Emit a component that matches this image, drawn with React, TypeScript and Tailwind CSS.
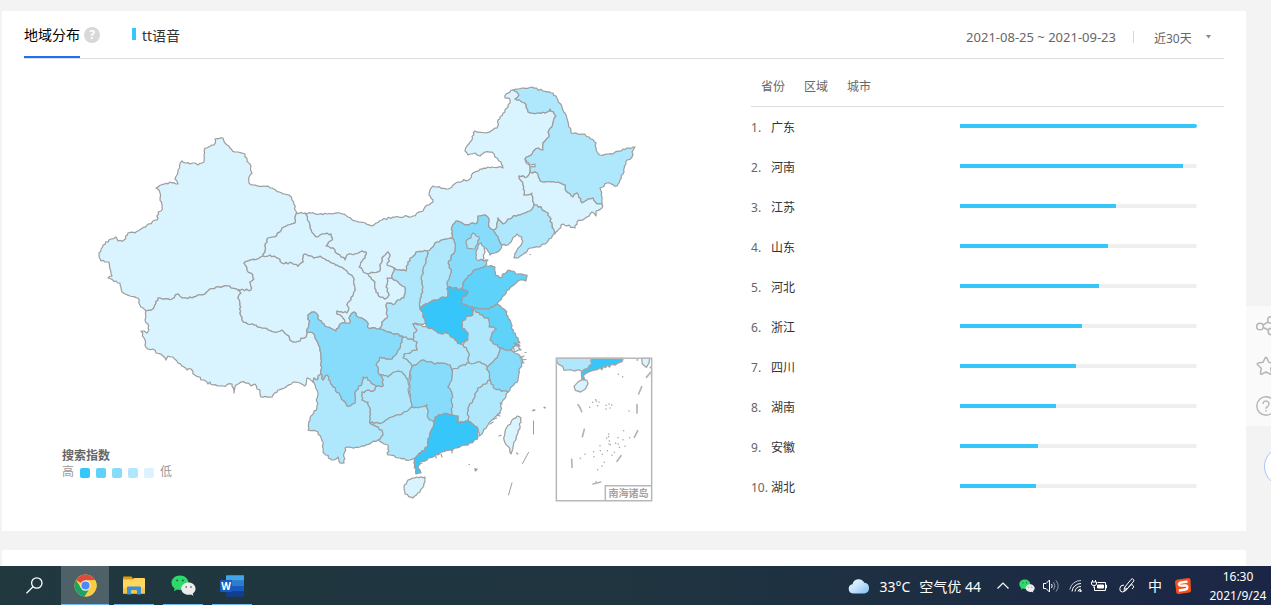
import type { ReactNode } from "react";
import { useState } from "react";

type Level = 1 | 2 | 3 | 4 | 5;

type Province = {
  name: string;
  level: Level;
  outline: string;
};

type Region = {
  name: string;
  share: number;
};

const LEVEL_COLORS: Record<Level, string> = {
  1: "#37c6fa",
  2: "#5fd2fa",
  3: "#87dcfb",
  4: "#afe8fd",
  5: "#d9f3ff",
};

const LEGEND = ["bg-[#37c6fa]", "bg-[#5fd2fa]", "bg-[#87dcfb]", "bg-[#afe8fd]", "bg-[#d9f3ff]"];

// Later provinces are painted over earlier ones, so shared borders stay one line wide.
const PROVINCES: Province[] = [
  {
    name: "内蒙古",
    level: 5,
    outline:
      "305,213 327,214 340,213 348,217 356,221 365,223 372,226 382,220 393,217 413,216 423,211 425,207 433,202 429,195 430,190 433,186 437,187 448,189 458,182 470,179 473,173 480,169 492,167 503,168 501,162 495,157 492,152 485,152 480,156 475,153 468,155 465,151 470,142 475,131 485,133 497,128 498,120 508,107 510,103 509,98 505,98 506,94 513,90 517,92 519,95 515,99 525,103 528,112 537,113 547,112 550,109 556,116 553,123 549,130 549,137 543,143 543,150 538,148 525,159 530,167 530,172 527,177 519,176 523,185 524,195 532,193 534,205 530,211 518,215 508,219 503,224 498,218 497,227 493,230 489,227 489,220 485,215 478,216 477,223 465,225 456,221 452,227 452,238 437,242 433,247 427,251 416,252 408,262 406,271 397,270 394,268 387,265 390,255 388,252 382,258 380,271 368,274 365,273 359,267 365,258 366,252 362,251 355,254 347,255 345,260 340,255 335,252 333,248 326,246 332,240 331,234 325,234 316,237 310,228 309,222",
  },
  {
    name: "新疆",
    level: 5,
    outline:
      "297,213 292,200 289,195 283,194 272,188 264,186 253,185 249,183 249,177 252,173 251,166 247,161 245,154 238,152 235,152 230,148 225,143 223,138 215,139 214,145 205,148 204,155 204,162 198,165 195,163 190,164 182,161 178,170 175,179 178,184 170,182 156,188 159,190 160,198 162,207 161,211 158,212 157,220 147,225 135,233 128,233 124,240 118,241 116,237 111,239 103,245 99,253 101,261 109,262 110,269 112,276 108,278 120,283 122,292 130,296 138,298 141,307 146,311 153,309 158,298 172,299 178,294 182,298 192,298 198,295 205,294 210,289 227,286 238,290 251,290 250,282 254,279 251,273 247,270 244,263 263,256 268,238 275,237 282,228 288,225 295,223 296,214",
  },
  {
    name: "西藏",
    level: 5,
    outline:
      "238,290 227,286 210,289 205,294 198,295 192,298 182,298 178,294 172,299 158,298 153,309 146,311 145,320 148,324 149,330 147,333 144,331 141,331 144,338 145,345 148,349 153,349 156,353 163,356 166,360 168,356 173,357 178,363 184,367 187,370 191,369 193,374 200,377 201,380 204,380 208,384 210,382 213,385 223,386 232,384 234,393 236,385 241,382 248,383 251,386 255,384 257,389 260,390 261,397 272,397 278,390 287,386 293,382 300,383 305,386 307,378 313,382 314,378 317,380 318,376 321,374 321,363 320,350 318,343 315,338 313,333 307,332 306,337 301,338 300,341 296,342 290,340 289,336 282,330 277,332 262,328 256,325 248,324 242,320 240,313 240,303 238,298 241,293",
  },
  {
    name: "青海",
    level: 5,
    outline:
      "244,263 247,270 251,273 254,279 250,282 251,290 238,290 241,293 238,298 240,303 240,313 242,320 248,324 256,325 262,328 277,332 282,330 289,336 290,340 296,342 300,341 301,338 306,337 307,332 309,323 308,315 312,312 317,314 319,320 327,327 336,331 340,324 345,323 343,318 337,314 337,311 347,313 349,308 347,305 353,296 355,288 353,277 348,273 343,268 332,263 325,259 320,256 314,258 304,254 303,262 298,266 292,263 282,263 280,259 270,255 263,256",
  },
  {
    name: "甘肃",
    level: 5,
    outline:
      "263,256 268,238 275,237 282,228 288,225 295,223 296,214 297,213 305,213 309,222 310,228 316,237 325,234 331,234 332,240 326,246 333,248 335,252 340,255 345,260 347,255 355,254 362,251 366,252 365,258 359,267 365,273 368,274 375,282 376,292 380,297 385,299 389,295 386,287 387,278 392,278 398,282 405,287 404,298 398,300 395,304 387,303 387,318 382,322 381,327 377,329 368,328 367,322 358,317 354,312 350,316 350,323 345,323 343,318 337,314 337,311 347,313 349,308 347,305 353,296 355,288 353,277 348,273 343,268 332,263 325,259 320,256 314,258 304,254 303,262 298,266 292,263 282,263 280,259 270,255",
  },
  {
    name: "宁夏",
    level: 5,
    outline:
      "368,274 380,271 382,258 388,252 390,255 387,265 394,268 392,278 387,278 386,287 389,295 385,299 380,297 376,292 375,282",
  },
  {
    name: "黑龙江",
    level: 4,
    outline:
      "513,90 517,89 532,87 543,91 553,93 558,100 563,110 568,122 571,133 582,134 589,137 596,143 596,148 600,155 613,154 623,149 635,147 632,152 632,157 627,160 624,172 617,186 607,183 600,188 602,197 602,204 597,204 593,198 587,200 582,203 577,193 573,197 566,191 565,185 554,182 540,181 537,173 530,172 530,167 535,167 535,164 530,165 525,159 538,148 543,150 543,143 549,137 549,130 553,123 556,116 550,109 547,112 537,113 528,112 525,103 515,99 519,95 517,92",
  },
  {
    name: "吉林",
    level: 5,
    outline:
      "530,172 537,173 540,181 554,182 565,185 566,191 573,197 577,193 582,203 587,200 593,198 597,204 602,204 602,208 596,211 596,216 592,212 587,217 577,222 575,228 563,224 555,234 552,225 548,213 537,205 534,205 532,193 524,195 523,185 519,176 527,177",
  },
  {
    name: "辽宁",
    level: 4,
    outline:
      "537,205 548,213 552,225 554,234 548,241 540,247 530,248 518,258 514,258 517,250 522,243 522,237 517,234 512,240 508,245 502,245 495,233 493,230 497,227 498,218 503,224 508,219 518,215 530,211 534,205",
  },
  {
    name: "河北",
    level: 3,
    outline:
      "493,230 495,233 502,245 500,250 495,253 490,255 486,248 480,250 482,260 488,260 485,266 473,271 463,283 463,290 448,287 447,282 451,272 448,263 455,250 454,240 452,238 452,227 456,221 465,225 477,223 478,216 485,215 489,220 489,227",
  },
  {
    name: "北京",
    level: 4,
    outline: "473,233 476,236 479,237 478,243 475,249 467,248 466,243 468,239 471,238",
  },
  {
    name: "天津",
    level: 5,
    outline: "481,243 484,247 485,252 483,260 477,260 476,253 478,246",
  },
  {
    name: "山东",
    level: 2,
    outline:
      "485,266 495,267 495,275 500,278 508,270 518,274 527,275 526,281 520,280 510,288 502,297 497,304 490,308 478,309 472,307 461,303 462,299 468,292 463,290 463,283 473,271",
  },
  {
    name: "山西",
    level: 4,
    outline:
      "452,238 454,240 455,250 448,263 451,272 447,282 448,287 447,297 435,300 420,307 422,290 422,275 427,257 427,251 433,247 437,242",
  },
  {
    name: "陕西",
    level: 4,
    outline:
      "427,251 427,257 422,275 422,290 420,307 423,315 427,324 413,324 417,330 414,333 414,341 402,336 390,332 380,329 381,327 382,322 387,318 387,303 395,304 398,300 404,298 405,287 398,282 392,278 394,268 397,270 406,271 408,262 416,252",
  },
  {
    name: "河南",
    level: 1,
    outline:
      "420,307 435,300 447,297 448,287 463,290 468,292 462,299 461,303 472,307 473,315 468,316 462,322 462,328 468,333 468,340 460,344 455,340 449,334 438,333 427,327 423,315",
  },
  {
    name: "江苏",
    level: 2,
    outline:
      "472,307 478,309 490,308 497,304 505,310 510,320 513,332 518,338 520,343 514,343 520,346 513,347 512,351 500,348 490,340 492,333 496,329 493,327 489,327 488,318 480,315",
  },
  {
    name: "安徽",
    level: 4,
    outline:
      "472,307 480,315 488,318 489,327 493,327 496,329 492,333 490,340 500,348 497,358 487,367 480,362 469,363 468,352 463,345 468,340 468,333 462,328 462,322 468,316 473,315",
  },
  {
    name: "浙江",
    level: 3,
    outline:
      "500,348 512,351 518,354 522,358 523,362 520,368 518,380 508,392 495,389 490,380 487,367 497,358",
  },
  {
    name: "上海",
    level: 5,
    outline: "513,347 518,346 521,350 514,352",
  },
  {
    name: "湖北",
    level: 4,
    outline:
      "413,324 427,327 438,333 449,334 455,340 460,344 463,345 468,352 469,363 452,370 450,365 433,363 423,360 412,367 409,362 403,358 404,354 417,350 417,342 414,341 414,333 417,330",
  },
  {
    name: "重庆",
    level: 4,
    outline:
      "402,336 414,341 417,342 417,350 404,354 403,358 409,362 412,367 410,372 408,381 402,372 395,372 388,377 380,375 376,365 380,357 392,359 398,350 402,342",
  },
  {
    name: "湖南",
    level: 3,
    outline:
      "412,367 423,360 433,363 450,365 452,370 452,378 448,387 452,393 452,415 443,414 434,422 428,418 427,405 420,407 412,407 410,397 410,385 410,372",
  },
  {
    name: "江西",
    level: 4,
    outline:
      "452,370 469,363 480,362 487,367 490,380 478,388 473,400 468,408 468,421 457,423 458,416 452,415 452,393 448,387 452,378",
  },
  {
    name: "福建",
    level: 4,
    outline:
      "490,380 495,389 508,392 502,402 500,413 488,425 479,436 477,427 468,421 468,408 473,400 478,388",
  },
  {
    name: "云南",
    level: 4,
    outline:
      "321,374 323,380 327,375 332,385 340,395 347,406 355,403 355,392 362,383 363,377 367,377 368,380 377,386 375,390 362,392 362,400 368,402 370,412 370,423 382,430 383,435 378,440 372,442 360,447 345,448 344,463 340,463 338,457 332,460 323,452 323,442 318,432 308,430 310,418 317,408 317,390 313,382 314,378 317,380 318,376",
  },
  {
    name: "贵州",
    level: 4,
    outline:
      "380,375 388,377 395,372 402,372 408,381 410,397 412,407 403,413 392,417 382,423 370,423 370,412 368,402 362,400 362,392 375,390 377,386 383,386 383,380",
  },
  {
    name: "四川",
    level: 3,
    outline:
      "307,332 309,323 308,315 312,312 317,314 319,320 327,327 336,331 340,324 345,323 350,323 350,316 354,312 358,317 367,322 368,328 377,329 380,329 390,332 402,336 402,342 398,350 392,359 380,357 376,365 380,375 383,380 383,386 377,386 368,380 367,377 363,377 362,383 355,392 355,403 347,406 340,395 332,385 327,375 323,380 321,374 321,363 320,350 318,343 315,338 313,333",
  },
  {
    name: "广西",
    level: 4,
    outline:
      "370,423 382,423 392,417 403,413 412,407 420,407 427,405 428,418 434,422 430,433 427,447 415,458 410,460 400,458 388,455 388,445 378,440 383,435 382,430",
  },
  {
    name: "广东",
    level: 1,
    outline:
      "434,422 435,417 443,414 452,415 458,416 457,423 468,421 477,427 478,437 472,443 461,446 450,450 442,452 433,457 420,462 418,468 421,473 416,474 414,463 415,458 427,447 430,433",
  },
  {
    name: "海南",
    level: 5,
    outline: "408,480 417,477 425,477 425,482 420,492 413,498 405,494 404,487",
  },
  {
    name: "台湾",
    level: 5,
    outline: "517,416 521,418 520,426 518,433 513,447 511,454 510,449 504,440 505,432 507,427",
  },
];

const REGIONS: Region[] = [
  { name: "广东", share: 100 },
  { name: "河南", share: 94 },
  { name: "江苏", share: 66 },
  { name: "山东", share: 62.5 },
  { name: "河北", share: 58.5 },
  { name: "浙江", share: 51.5 },
  { name: "四川", share: 49 },
  { name: "湖南", share: 40.5 },
  { name: "安徽", share: 33 },
  { name: "湖北", share: 32 },
];

const ISLETS = [
  [149, 187], [158, 172], [167, 164], [169, 168], [177, 171], [173, 182], [198, 181], [198, 192],
  [207, 177], [215, 180], [210, 189], [267, 198], [235, 88], [248, 95], [251, 257], [206, 267],
  [206, 275], [200, 279], [234, 278], [249, 284], [269, 278], [208, 288], [207, 297], [211, 299],
  [227, 295], [235, 297], [180, 302], [238, 307], [255, 304], [161, 320], [181, 317], [202, 317],
  [162, 335], [187, 328], [216, 331], [223, 322], [135, 328], [121, 340], [193, 352], [186, 363],
  [173, 374], [168, 410],
];

type Point = [number, number];

function noise(a: number, b: number, seed: number) {
  const n = Math.sin(a * 12.9898 + b * 78.233 + seed * 37.719) * 43758.5453;
  return (n - Math.floor(n)) * 2 - 1;
}

// Adds small bends to each edge. The bend depends only on the edge itself,
// so two neighbours bend their shared border in the same way.
function roughen(outline: string) {
  const points = outline.split(" ").map((pair) => pair.split(",").map(Number) as Point);
  let d = "";
  points.forEach((start, i) => {
    const end = points[(i + 1) % points.length];
    const flip = start[0] > end[0] || (start[0] === end[0] && start[1] > end[1]);
    const [p, q] = flip ? [end, start] : [start, end];
    const dx = q[0] - p[0];
    const dy = q[1] - p[1];
    const length = Math.hypot(dx, dy);
    const count = Math.floor(length / 2);
    const bends: Point[] = [];
    for (let k = 1; k < count; k++) {
      const t = k / count;
      const offset = noise(p[0] + q[0], p[1] + q[1], k);
      bends.push([p[0] + dx * t - (dy / length) * offset, p[1] + dy * t + (dx / length) * offset]);
    }
    if (flip) bends.reverse();
    d += `${i === 0 ? "M" : "L"}${start[0]} ${start[1]}`;
    bends.forEach(([x, y]) => {
      d += `L${x.toFixed(1)} ${y.toFixed(1)}`;
    });
  });
  return `${d}Z`;
}

const SHAPES = PROVINCES.map((province) => ({ ...province, d: roughen(province.outline) }));

function ChinaMap() {
  return (
    <svg viewBox="24 59 727 448" className="block w-full" role="img" aria-label="tt语音">
      <g stroke="#9d9d9d" strokeWidth="1.2" strokeLinejoin="round">
        {SHAPES.map(({ name, level, d }) => (
          <path key={name} d={d} fill={LEVEL_COLORS[level]} />
        ))}
      </g>
      <g fill="none" stroke="#9d9d9d" strokeWidth="1.2" strokeLinecap="round">
        <path strokeWidth="1" d="M533.5 421v13M528.500 452.500l-6 11M512 483l-3.500 12" />
        <path strokeWidth="1.800" d="M533 410.500l1.500-.5M544.300 407.500l.5.200M475 469l1.500.5-1 1" />
        <path d="M499 436l2-.800M516.500 453l1.500 1M469 464.500h.5M525 352.500h1" />
        <path d="M520 358l4-2M521 360l5-.5M521 362l3 1M530 254.500h.5M526 253h.5" />
        <path d="M500 403l2 1M500 413l-3 2 3 1M497 418l-4 1M493 422l-3 2M452 450v3M441 454l1 3M436 456v2M420 464l2-1" />
      </g>
      <g transform="translate(540 345) scale(.33333)">
        <g stroke="#a5a5a5" strokeWidth="4" strokeLinejoin="round">
          <path
            fill="#afe8fd"
            d="M50 40H155L153 50 156 56 148 62 144 70 132 74 126 80 118 74 102 78 92 74 72 76 68 64 56 58 50 50Z"
          />
          <path
            fill="#37c6fa"
            d="M155 40H250L246 50 234 54 226 60 214 58 208 66 202 60 197 68 190 64 186 74 180 68 172 74 160 76 148 80 136 86 130 92 135 106 126 104 124 84 132 74 144 70 148 62 156 56 153 50Z"
          />
          <path fill="#d9f3ff" d="M115 110 128 104 141 106 144 116 136 132 122 141 106 136 102 124Z" />
          <path fill="#d9f3ff" d="M305 40H329L327 54 319 67 307 57Z" />
        </g>
        <g fill="none" stroke="#b4b4b4" strokeWidth="5" strokeLinecap="round">
          <path d="M114 179 119 186 125 200M133 253 127 275M95 343 96 367M159 417 182 411M243 332 231 349M293 257 283 277M291 179V204M305 125 296 147M332 82 319 97M292 42V46M331 66V68" />
        </g>
        <g fill="#a3a3a3">
          {ISLETS.map(([x, y]) => (
            <circle key={`${x}-${y}`} cx={x} cy={y} r="2.300" />
          ))}
        </g>
        <path fill="none" stroke="#b8b8b8" strokeWidth="4.500" d="M49 40H335V467H49ZM196 467V422H335" />
      </g>
      <text
        x="628.500"
        y="497"
        textAnchor="middle"
        fill="#a3a3a3"
        className="font-['Noto_Sans_CJK_SC',sans-serif] text-[10px] font-bold"
      >
        南海诸岛
      </text>
    </svg>
  );
}

function MapLegend() {
  return (
    <div className="absolute left-[38px] top-[389px] text-xs leading-4">
      <div className="font-bold text-[#666]">搜索指数</div>
      <div className="flex items-center text-[#999]">
        <span>高</span>
        <span className="mx-[6px] mt-px flex gap-[6px]">
          {LEGEND.map((color) => (
            <i key={color} className={`size-[10px] rounded-[2px] ${color}`} />
          ))}
        </span>
        <span>低</span>
      </div>
    </div>
  );
}

function RegionRanking() {
  const [tab, setTab] = useState("省份");

  return (
    <div className="w-[473px] shrink-0">
      <div className="flex h-12 items-center gap-[19px] border-b border-[#dedede] px-[10px] pt-2">
        {["省份", "区域", "城市"].map((name) => (
          <button
            key={name}
            type="button"
            aria-pressed={tab === name}
            onClick={() => setTab(name)}
            className="text-xs text-[#666]"
          >
            {name}
          </button>
        ))}
      </div>
      <ol>
        {REGIONS.map(({ name, share }, index) => (
          <li key={name} className="flex h-10 items-center pr-[27px] text-xs text-[#333]">
            <span className="w-5 pt-0.5 whitespace-nowrap text-[#666]">{index + 1}.</span>
            <span className="w-[189px] pt-0.5">{name}</span>
            <div className="mb-[2px] h-1 flex-1 overflow-hidden rounded-r-sm bg-[#efefef]">
              <div className="h-full bg-[#37c6fa]" style={{ width: `${share}%` }} />
            </div>
          </li>
        ))}
      </ol>
    </div>
  );
}

function SideTools() {
  return (
    <aside className="absolute right-0 top-[306px] w-[25px] overflow-hidden">
      <div className="bg-[#fafafa] pl-[10px] text-[#b5b5b5]">
        <button type="button" aria-label="分享" className="flex h-10 w-5 items-center">
          <svg viewBox="0 0 20 20" className="size-5 shrink-0" fill="none" stroke="currentColor" strokeWidth="1.500">
            <circle cx="4" cy="10.500" r="3.300" />
            <circle cx="15" cy="4" r="3.300" />
            <circle cx="15.500" cy="15.500" r="3.300" />
            <path d="M7 9l5.300-3.200M7.200 11.500l5.200 2.500" />
          </svg>
        </button>
        <button type="button" aria-label="收藏" className="flex h-10 w-5 items-center">
          <svg viewBox="0 0 20 20" className="size-5 shrink-0" fill="none" stroke="currentColor" strokeWidth="1.500" strokeLinejoin="round">
            <path d="M9.200 1.800q.8-1.300 1.600 0l2 4.500 4.900.8q1.500.4.500 1.600l-3.500 3.500.8 5q0 1.500-1.300 1L10 16l-4.300 2.200q-1.300.5-1.200-1l.8-5L1.600 8.700q-1-1.200.5-1.600l4.900-.8z" />
          </svg>
        </button>
        <button type="button" aria-label="帮助" className="flex h-10 w-5 items-center">
          <svg viewBox="0 0 20 20" className="size-5 shrink-0" fill="none" stroke="currentColor" strokeWidth="1.400">
            <circle cx="10" cy="10" r="9.200" />
            <path d="M7 8a3 3 0 1 1 4.600 2.500Q10 11.300 10 12.700M10 14v1.500" />
          </svg>
        </button>
      </div>
      <button
        type="button"
        aria-label="更多"
        className="ml-[18px] mt-[21px] block size-[39px] rounded-full border border-[#a5c5ff] bg-white"
      />
    </aside>
  );
}

function WeChatIcon({ className }: { className: string }) {
  return (
    <svg viewBox="0 0 25 21" className={className}>
      <path fill="#2fd86a" d="M9 .5C4 .5.500 3.800.500 7.800c0 2.400 1.200 4.400 3.200 5.700l-.8 2.800 3.200-1.700c1 .3 1.900.4 2.900.4 5 0 8.500-3.200 8.500-7.200S14 .5 9 .5z" />
      <path fill="#ececec" d="M17.500 7.600c-4.100 0-7.200 2.700-7.200 6.100s3.100 6.100 7.200 6.100c.8 0 1.700-.1 2.400-.4l2.500 1.300-.6-2.200c1.700-1.100 2.700-2.800 2.700-4.800 0-3.400-3-6.100-7-6.100z" />
      <g fill="#126c38">
        <circle cx="6.200" cy="5.500" r="1" />
        <circle cx="11.800" cy="5.500" r="1" />
      </g>
      <g fill="#777">
        <circle cx="15.200" cy="12" r=".9" />
        <circle cx="20" cy="12" r=".9" />
      </g>
    </svg>
  );
}

function ChromeIcon() {
  return (
    <svg viewBox="0 0 24 24" className="size-[23px]">
      <circle cx="12" cy="12" r="11.500" fill="#ffcd40" />
      <path fill="#dd4b3e" d="M12 12 2 6.300A11.500 11.500 0 0 1 22.200 6.500H12z" />
      <path fill="#1da462" d="M2 6.300A11.500 11.500 0 0 0 11.200 23.500L16.700 14.800 12 12 7.200 14.700z" />
      <path fill="#ffcd40" d="M22.200 6.500H12l4.700 8.300-5.500 8.700A11.500 11.500 0 0 0 22.200 6.500z" />
      <circle cx="12" cy="12" r="5.400" fill="#f4f4f4" />
      <circle cx="12" cy="12" r="4.300" fill="#4c8bf5" />
    </svg>
  );
}

function FolderIcon() {
  return (
    <svg viewBox="0 0 22 20" className="h-5 w-[22px]">
      <path fill="#e09c0c" d="M0 1.500Q0 .5 1 .5h7.500L10 2.500V7H0z" />
      <path fill="#ffd75e" d="M0 3.500h9.500l1.500-1.500h10Q22 2 22 3v14.500H0z" />
      <path fill="#f6c646" d="M0 12h22v5.500H0z" />
      <path fill="#3990d8" d="M4 11.500Q4 10.500 5 10.500h12Q18 10.500 18 11.500V18.500H14V15Q14 14 13 14H9Q8 14 8 15V18.500H4z" />
    </svg>
  );
}

function WordIcon() {
  return (
    <svg viewBox="0 0 24 22" className="h-[22px] w-6">
      <path fill="#41a5ee" d="M6 1Q6 .2 7 .2h17v5.500H6z" />
      <path fill="#2b7cd3" d="M6 5.700h18V11H6z" />
      <path fill="#185abd" d="M6 11h18v5.500H6z" />
      <path fill="#103f91" d="M6 16.500h18v5.300H7q-1 0-1-1z" />
      <rect y="5" width="12" height="12" rx="1" fill="#185abd" />
      <text x="6" y="14.500" textAnchor="middle" fill="#fff" className="font-['Open_Sans',sans-serif] text-[10px] font-bold">
        W
      </text>
    </svg>
  );
}

type TaskButtonProps = {
  label: string;
  running?: boolean;
  active?: boolean;
  children: ReactNode;
};

function TaskButton({ label, running, active, children }: TaskButtonProps) {
  return (
    <button
      type="button"
      aria-label={label}
      className={`relative flex h-full w-12 items-center justify-center ${active ? "bg-[#4e6169]" : ""}`}
    >
      {children}
      {running && (
        <span className={`absolute bottom-0 h-px bg-[#76b9ed] ${active ? "inset-x-0" : "inset-x-1"}`} />
      )}
    </button>
  );
}

function TrayIcons() {
  return (
    <div className="flex items-center text-white">
      <button type="button" aria-label="展开" className="flex w-6 justify-center">
        <svg viewBox="0 0 12 7" className="h-[7px] w-3" fill="none" stroke="currentColor" strokeWidth="1.200">
          <path d="M.5 6.500 6 1l5.500 5.500" />
        </svg>
      </button>
      <button type="button" aria-label="微信" className="flex w-6 justify-center">
        <WeChatIcon className="h-[14px] w-4" />
      </button>
      <button type="button" aria-label="音量" className="flex w-6 justify-center">
        <svg viewBox="0 0 17 14" className="h-[14px] w-[17px]" fill="none" stroke="currentColor">
          <path d="M.5 4.500h2.500L6.500 1v12L3 9.500H.5z" />
          <path d="M8.500 5q1.500 2 0 4" />
          <path d="M10.500 3.200q3 3.800 0 7.600M13 1.500q4.400 5.500 0 11" opacity=".5" />
        </svg>
      </button>
      <button type="button" aria-label="网络" className="flex w-6 justify-center">
        <svg viewBox="0 0 13 13" className="size-[13px]" fill="none" stroke="currentColor">
          <path d="M.8 10.500A11 11 0 0 1 12 1.500" opacity=".7" />
          <path d="M3 12.500A9 9 0 0 1 12 4.500M6 12.500a6 6 0 0 1 6-5M9 12.500a3 3 0 0 1 3-2.500" />
          <circle cx="11.500" cy="12" r=".8" fill="currentColor" />
        </svg>
      </button>
      <button type="button" aria-label="电池" className="flex w-6 justify-center">
        <svg viewBox="0 0 16 12" className="h-3 w-4" fill="none" stroke="currentColor">
          <path d="M6.500 2.500H14.500V10.500H3.500V7M14.500 5H15.500V8H14.500" />
          <path d="M6.500 5h6v3h-6z" fill="currentColor" />
          <path d="M1.500 0v2M4.500 0v2M.5 2h5v2Q5.500 5.500 3 5.500T.5 4zM3 5.500V8" />
        </svg>
      </button>
      <button type="button" aria-label="手写笔" className="ml-[2px] flex w-7 justify-center">
        <svg viewBox="0 0 16 15" className="h-[15px] w-4" fill="none" stroke="currentColor" strokeLinejoin="round">
          <path d="M5 12.500 5.500 9.500 12 1.500Q13.500 0 14.500 1.500T14 4L8 11zM5.500 9.500 8 11" />
          <path d="M5 7Q1 7 .8 10.500T3.500 14Q6.500 14 9.500 9.500T14 7.500Q16 9 13 11" />
        </svg>
      </button>
      <button type="button" className="w-7 text-center text-sm leading-5">
        中
      </button>
      <button type="button" aria-label="搜狗输入法" className="flex w-7 justify-center">
        <svg viewBox="0 0 16 16" className="size-4">
          <path fill="#f4511e" d="M2.500 1.500 13.500 0Q15.300 0 15.500 1.800L16 12.500Q16 14 14.500 14.500L3.500 16Q1.700 16 1.300 14.500L0 4Q0 2 2.500 1.500z" />
          <path fill="none" stroke="#fff" strokeWidth="2.300" d="M12.500 3.700 6 4.500Q3.500 5 4 6.500T6.500 7.600L10.300 7.400Q12.300 7.500 12.300 9.300T10.500 11.500L3.800 12.500" />
        </svg>
      </button>
    </div>
  );
}

function Taskbar() {
  return (
    <footer className="flex h-[39px] shrink-0 items-center justify-between bg-gradient-to-r from-[#21383f] via-[#1f343f] to-[#1b2646] pl-3 text-white">
      <div className="flex h-full gap-px">
        <TaskButton label="搜索">
          <svg viewBox="0 0 17 17" className="mr-1 size-[17px]" fill="none" stroke="currentColor" strokeWidth="1.300">
            <circle cx="10.800" cy="6" r="5.200" />
            <path d="M7 9.800.5 16.300" />
          </svg>
        </TaskButton>
        <TaskButton label="Chrome" running active>
          <ChromeIcon />
        </TaskButton>
        <TaskButton label="文件资源管理器" running>
          <FolderIcon />
        </TaskButton>
        <TaskButton label="微信" running>
          <WeChatIcon className="h-[21px] w-[25px]" />
        </TaskButton>
        <TaskButton label="Word" running>
          <WordIcon />
        </TaskButton>
      </div>
      <div className="flex h-full items-center">
        <button type="button" className="mr-[10px] flex items-center gap-[9px] text-sm leading-5 whitespace-nowrap">
          <svg viewBox="0 0 22 16" className="h-4 w-[22px]">
            <defs>
              <linearGradient id="cloud" x1="0" y1="0" x2="1" y2="1">
                <stop offset="0" stopColor="#f5fbff" />
                <stop offset=".5" stopColor="#c3e2fb" />
                <stop offset="1" stopColor="#7fbcf0" />
              </linearGradient>
            </defs>
            <path fill="url(#cloud)" d="M5 15.500A4.700 4.700 0 0 1 4.500 6.200 6.300 6.300 0 0 1 16.300 4.800 5.400 5.400 0 0 1 16.500 15.500z" />
          </svg>
          <span className="pt-0.5">33°C</span>
          <span className="pt-0.5">空气优 44</span>
        </button>
        <TrayIcons />
        <button type="button" className="ml-1 w-[70px] pl-1 text-center text-xs leading-[19px]">
          16:30
          <br />
          2021/9/24
        </button>
      </div>
    </footer>
  );
}

export default function App() {
  return (
    <div className="relative flex h-screen flex-col overflow-hidden bg-[#f3f3f3] font-['Noto_Sans','Noto_Sans_CJK_SC',sans-serif]">
      <main className="flex min-h-0 flex-1 flex-col overflow-hidden pl-[2px] pr-[25px] pt-[11px]">
        <section className="shrink-0 bg-white px-[22px] pb-6">
          <header className="flex h-12 items-center border-b border-[#dedede]">
            <h2 className="flex h-full items-center border-b-2 border-[#1f6ff0] pt-[3px] text-sm text-black">
              地域分布
            </h2>
            <button
              type="button"
              aria-label="说明"
              className="ml-1 size-4 rounded-full bg-[#d8d8d8] text-center text-xs leading-4 font-bold text-white"
            >
              ?
            </button>
            <span className="ml-8 mb-[2px] h-3 w-1 bg-[#37c6fa]" />
            <span className="ml-[6px] pt-0.5 text-sm text-[#333]">tt语音</span>
            <div className="ml-auto flex items-center pt-1 text-[#666]">
              <span className="pt-0.5 text-[13px]">2021-08-25 ~ 2021-09-23</span>
              <span className="mx-[17px] h-3 w-px bg-[#ccd9e0]" />
              <div className="relative mr-[13px] w-[60px]">
                <select aria-label="时间范围" className="w-full appearance-none bg-transparent px-[3px] pb-0.5 text-xs">
                  <option>近30天</option>
                  <option>近7天</option>
                  <option>近90天</option>
                </select>
                <svg viewBox="0 0 5 4" className="pointer-events-none absolute right-0 top-1/2 h-1 w-[5px] -translate-y-1/2">
                  <path fill="#888" d="M0 0h5L2.500 3.500z" />
                </svg>
              </div>
            </div>
          </header>
          <div className="flex">
            <div className="relative min-w-0 flex-1">
              <ChinaMap />
              <MapLegend />
            </div>
            <RegionRanking />
          </div>
        </section>
        <section className="mt-[19px] flex-1 bg-white" />
      </main>
      <SideTools />
      <Taskbar />
    </div>
  );
}
